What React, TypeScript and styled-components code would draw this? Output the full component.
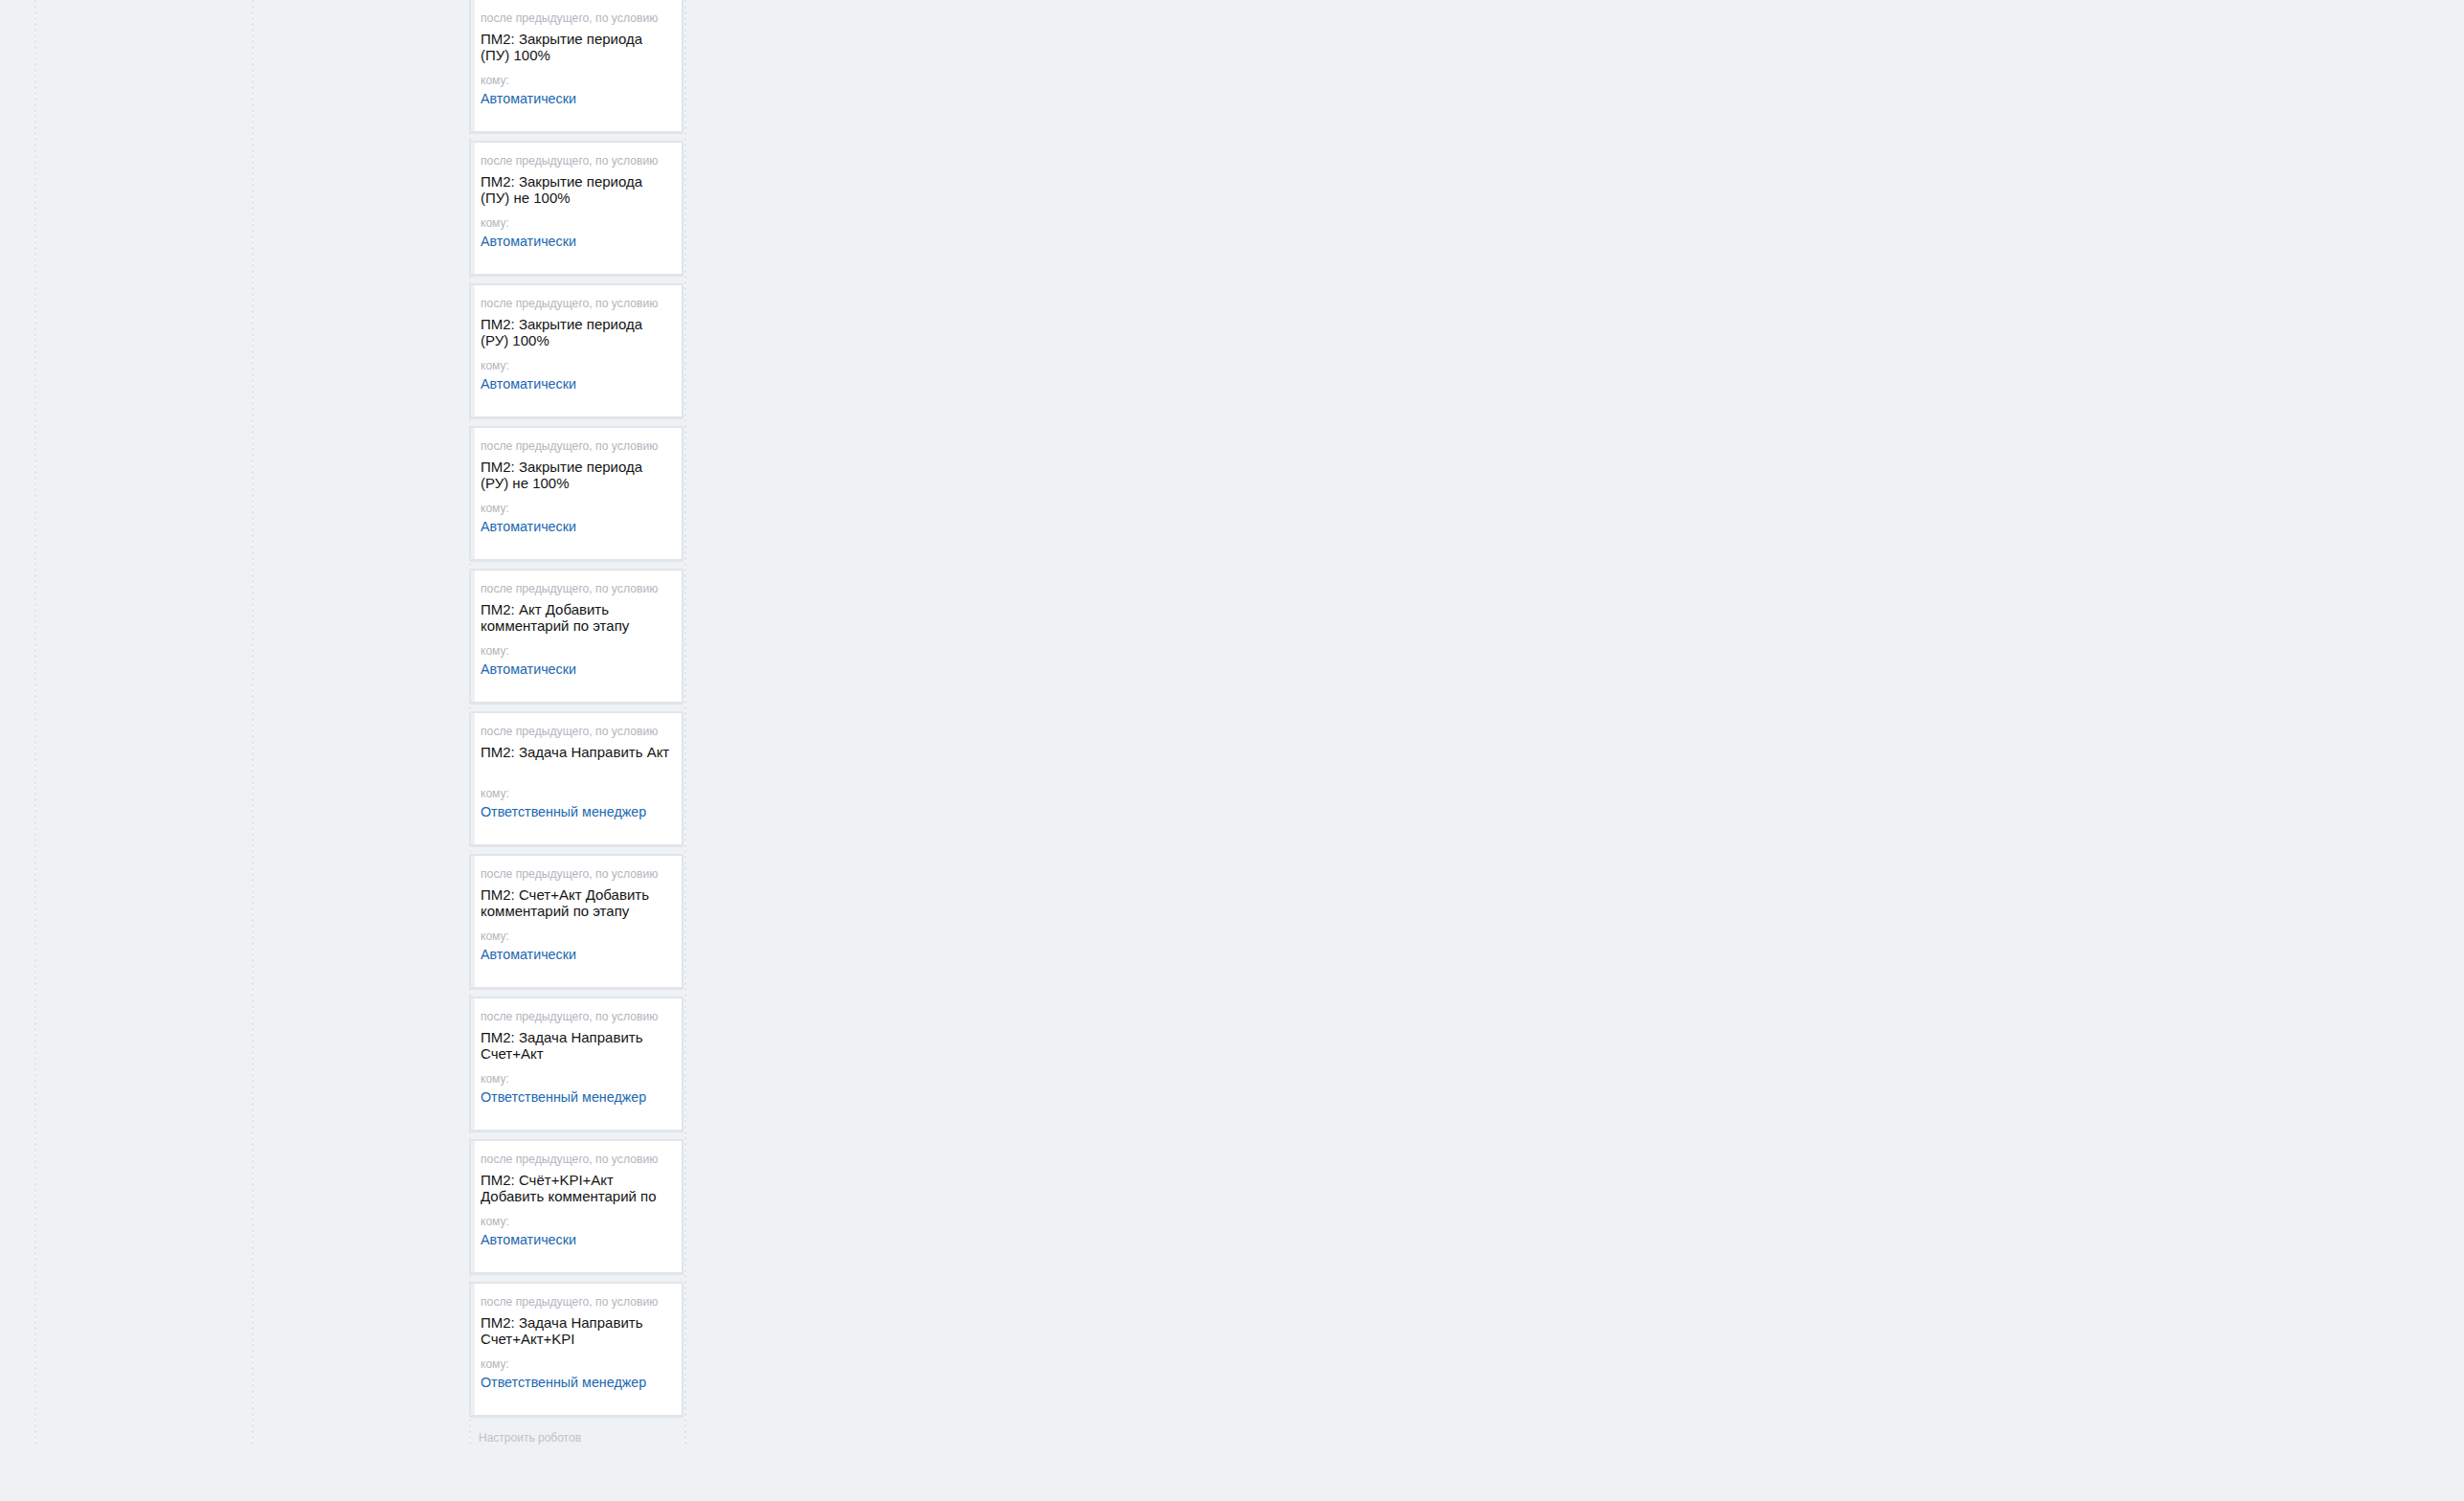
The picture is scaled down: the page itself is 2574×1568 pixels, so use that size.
import React from 'react';
import styled, { createGlobalStyle } from 'styled-components';

const GlobalStyle = createGlobalStyle`
  html, body {
    margin: 0;
    padding: 0;
    background: #eef2f4;
    font-family: "Liberation Sans", Arial, Helvetica, sans-serif;
  }
`;

type Robot = {
  title: string;
  to: string;
};

const robots: Robot[] = [
  { title: 'ПМ2: Закрытие периода (ПУ) 100%', to: 'Автоматически' },
  { title: 'ПМ2: Закрытие периода (ПУ) не 100%', to: 'Автоматически' },
  { title: 'ПМ2: Закрытие периода (РУ) 100%', to: 'Автоматически' },
  { title: 'ПМ2: Закрытие периода (РУ) не 100%', to: 'Автоматически' },
  { title: 'ПМ2: Акт Добавить комментарий по этапу', to: 'Автоматически' },
  { title: 'ПМ2: Задача Направить Акт', to: 'Ответственный менеджер' },
  { title: 'ПМ2: Счет+Акт Добавить комментарий по этапу', to: 'Автоматически' },
  { title: 'ПМ2: Задача Направить Счет+Акт', to: 'Ответственный менеджер' },
  { title: 'ПМ2: Счёт+KPI+Акт Добавить комментарий по этапу', to: 'Автоматически' },
  { title: 'ПМ2: Задача Направить Счет+Акт+KPI', to: 'Ответственный менеджер' },
];

// column separators are drawn as a 2px dashed strip
const dash = 'repeating-linear-gradient(to bottom, #e3e6ea 0 3px, #f4f5f7 3px 6px)';

const Board = styled.div`
  display: flex;
  align-items: flex-start;
  padding-left: 36px;
`;

const Column = styled.div<{ $last?: boolean }>`
  width: 227px;
  min-height: 1513px;
  box-sizing: border-box;
  display: flex;
  flex-direction: column;
  background-image: ${dash}${(p) => (p.$last ? `, ${dash}` : '')};
  background-size: 2px 100%${(p) => (p.$last ? ', 2px 100%' : '')};
  background-position: left top${(p) => (p.$last ? ', right top' : '')};
  background-repeat: no-repeat;
`;

const CardList = styled.div`
  display: flex;
  flex-direction: column;
  gap: 7px;
  margin-top: -2px;
`;

const Card = styled.div`
  width: 224px;
  height: 142px;
  box-sizing: border-box;
  background: #fff;
  border: 2px solid #e1e4e8;
  border-bottom-width: 3px;
  border-radius: 2px;
  box-shadow: inset 4px 0 0 #eef0f3;
  padding: 12px 10px 0 10px;
  display: flex;
  flex-direction: column;
`;

const Hint = styled.div`
  font-size: 12.2px;
  line-height: 14px;
  color: #b1b6bd;
  white-space: nowrap;
  overflow: hidden;
`;

// long names are cut after two lines, as in the robot list
const Title = styled.div`
  margin-top: 6px;
  height: 34px;
  overflow: hidden;
  font-size: 15px;
  line-height: 17px;
  color: #151515;
`;

const Label = styled.div`
  margin-top: 11px;
  font-size: 12px;
  line-height: 14px;
  color: #b1b6bd;
`;

const Responsible = styled.a`
  margin-top: 4px;
  font-size: 14.3px;
  line-height: 17px;
  color: #2067b0;
  text-decoration: none;
  cursor: pointer;
`;

const Setup = styled.div`
  margin-top: 14px;
  padding-left: 10px;
  font-size: 12px;
  line-height: 14px;
  color: #bfc3c8;
`;

const RobotCard = ({ robot }: { robot: Robot }) => (
  <Card>
    <Hint>после предыдущего, по условию</Hint>
    <Title>{robot.title}</Title>
    <Label>кому:</Label>
    <Responsible>{robot.to}</Responsible>
  </Card>
);

export default function App() {
  return (
    <>
      <GlobalStyle />
      <Board>
        <Column />
        <Column />
        <Column $last>
          <CardList>
            {robots.map((r) => (
              <RobotCard key={r.title} robot={r} />
            ))}
          </CardList>
          <Setup>Настроить роботов</Setup>
        </Column>
      </Board>
    </>
  );
}
